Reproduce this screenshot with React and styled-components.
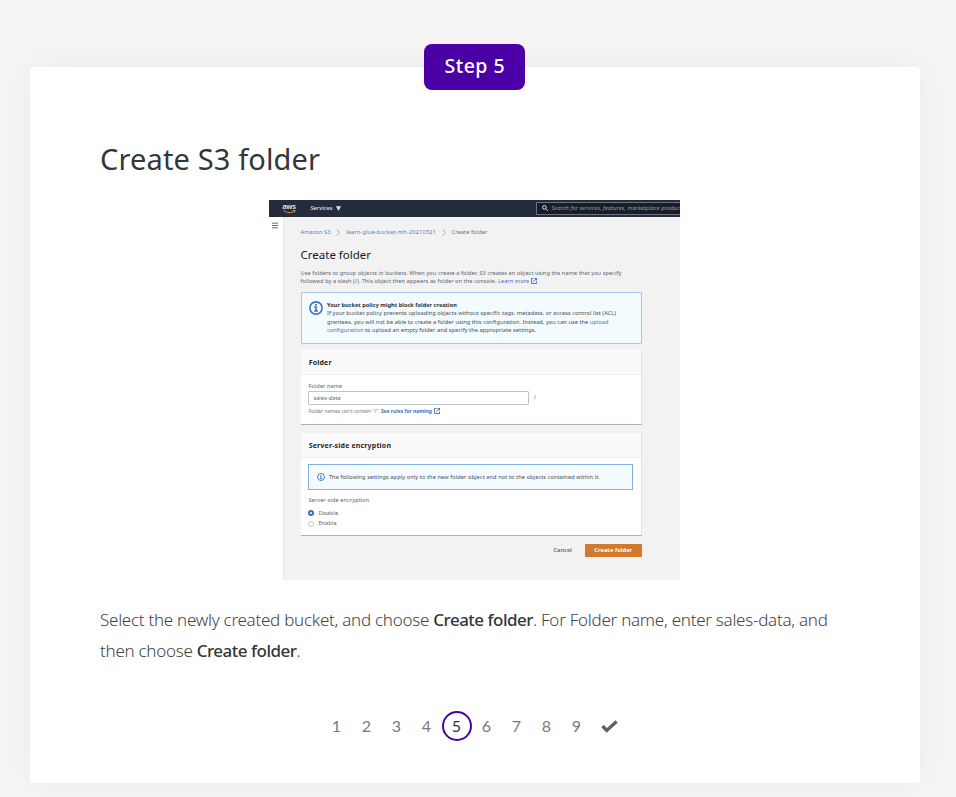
import React from 'react';
import styled, { createGlobalStyle } from 'styled-components';

const Global = createGlobalStyle`
  * { box-sizing: border-box; }
  body {
    margin: 0;
    background: #f5f5f5;
    font-family: "Noto Sans", "Open Sans", sans-serif;
    color: #333739;
    overflow: hidden;
  }
`;

const Page = styled.main`
  height: 797px;
  padding: 67px 36px 14px 30px;
`;
const Card = styled.section`
  position: relative;
  height: 716px;
  padding: 71px 70px 0;
  background: #fff;
  border-radius: 4px;
  box-shadow: 0 0 40px rgba(0, 0, 0, 0.05);
`;
const StepBadge = styled.div`
  position: absolute;
  top: -23px;
  left: 394.3px;
  width: 101px;
  height: 46px;
  border-radius: 8px;
  background: #4b00a5;
  color: #fff;
  font-size: 19.5px;
  font-weight: 500;
  line-height: 44px;
  letter-spacing: 0.5px;
  text-align: center;
`;
const Title = styled.h1`
  margin: 0;
  height: 62px;
  font-size: 29px;
  font-weight: 400;
  line-height: 41px;
  letter-spacing: 0.14px;
`;
const Body = styled.p`
  margin: 24px 0 0;
  height: 63px;
  color: #3f4345;
  font-size: 17px;
  font-weight: 300;
  line-height: 31px;
  letter-spacing: -0.265px;
  white-space: nowrap;
`;
const Strong = styled.strong`
  color: #333739;
  font-weight: 500;
  letter-spacing: -0.51px;
`;
const Pager = styled.nav`
  display: flex;
  align-items: center;
  height: 30px;
  margin: 44px 0 0 221.5px;
  font-family: Lato, sans-serif;
`;
const PageNumber = styled.a`
  width: 30px;
  height: 30px;
  border: 2px solid ${(p) => (p.$active ? '#4b00a5' : 'transparent')};
  border-radius: 50%;
  color: ${(p) => (p.$active ? '#333739' : '#77787b')};
  font-size: 16px;
  line-height: 26px;
  text-align: center;
`;
const CheckIcon = styled.svg`
  margin-left: 9px;
`;

/* Console screenshot */
const Shot = styled.figure`
  display: flex;
  flex-direction: column;
  width: 411px;
  height: 380px;
  margin: 0 0 0 169px;
  overflow: hidden;
  background: #f2f2f2;
`;
const TopBar = styled.header`
  display: flex;
  align-items: center;
  flex: none;
  height: 16.5px;
  background: #252d3d;
  color: #e4e7ea;
`;
const AwsLogo = styled.div`
  display: flex;
  flex-direction: column;
  align-items: center;
  flex: none;
  width: 15px;
  margin-left: 12.5px;
  font-size: 7.5px;
  font-weight: 600;
  line-height: 6px;
  letter-spacing: -0.2px;
`;
const Smile = styled.svg`
  margin-top: 0.5px;
`;
const Services = styled.div`
  display: flex;
  align-items: center;
  flex: none;
  gap: 3px;
  width: 225.5px;
  margin-left: 14px;
`;
const Search = styled.div`
  display: flex;
  align-items: center;
  gap: 4px;
  flex: 1;
  height: 13px;
  padding-left: 4.5px;
  border: 1px solid #6c7380;
  border-right: 0;
  background: #181d28;
  color: #9ea3aa;
`;
const Columns = styled.div`
  display: flex;
  flex: 1;
`;
const Rail = styled.aside`
  width: 14.5px;
  padding: 5px 0 0 2.5px;
  border-right: 1px solid #e5e7e7;
  background: #fff;
  line-height: 0;
`;
const Main = styled.div`
  width: 341px;
  margin-left: 17px;
  padding-top: 11px;
`;

const Text = styled.div`
  flex: none;
  color: ${(p) => p.$color || '#5c646e'};
  font-size: ${(p) => p.$size || 5.6}px;
  font-weight: ${(p) => p.$weight || 400};
  font-style: ${(p) => (p.$italic ? 'italic' : 'normal')};
  line-height: ${(p) => p.$line || 8.6}px;
  letter-spacing: ${(p) => p.$track || 0.08}px;
  white-space: nowrap;
`;
const Link = styled.span`
  color: #3b72c0;
  font-weight: ${(p) => p.$weight || 400};
`;
const Line = styled.div`
  display: flex;
  align-items: center;
  gap: ${(p) => p.$gap || 0}px;
`;
const Breadcrumbs = styled(Line)`
  height: 9px;
  gap: 5.5px;
`;
const Heading = styled.h2`
  margin: 8px 0 4px;
  height: 20px;
  color: #16191f;
  font-size: 11.5px;
  font-weight: 400;
  line-height: 20px;
`;
const Notice = styled.div`
  display: flex;
  gap: 4px;
  height: 52px;
  margin-top: 6px;
  padding: 8px 0 0 7.5px;
  border: 1.4px solid #a5c5ea;
  border-radius: 1px;
  background: #f3fbff;
`;
const InlineNotice = styled.div`
  display: flex;
  align-items: center;
  gap: 3.5px;
  width: 325px;
  height: 26px;
  padding-left: 8px;
  border: 1px solid #83aee0;
  background: #f3fbff;
`;
const Panel = styled.section`
  height: ${(p) => p.$height}px;
  margin-top: ${(p) => p.$gap}px;
  border-bottom: 1px solid #a9b0b2;
  border-right: 1px solid #dfe1e2;
  background: #fff;
`;
const PanelHeader = styled.h3`
  height: 25px;
  margin: 0;
  padding-left: 8.2px;
  border-bottom: 1px solid #eeefef;
  background: #fafafa;
  color: #23272e;
  font-size: 7px;
  font-weight: 700;
  line-height: 25px;
  letter-spacing: 0.17px;
`;
const PanelBody = styled.div`
  padding: ${(p) => p.$top}px 0 0 7.9px;
`;
const Input = styled.div`
  width: 220.5px;
  height: 13.5px;
  margin-top: 1px;
  padding-left: 4px;
  border: 1px solid #bfc4c6;
  border-radius: 1px;
`;
const Radio = styled.span`
  width: 6px;
  height: 6px;
  border: ${(p) => (p.$on ? '2px solid #3a6dc2' : '1px solid #c4cacc')};
  border-radius: 50%;
  background: #fff;
`;
const Actions = styled.div`
  display: flex;
  align-items: center;
  justify-content: flex-end;
  gap: 13px;
  margin-top: 7.5px;
`;
const Primary = styled.div`
  display: flex;
  align-items: center;
  justify-content: center;
  width: 56.5px;
  height: 13px;
  border-radius: 1px;
  background: #d17a2d;
`;

const External = () => (
  <svg width="6" height="6" viewBox="0 0 12 12" fill="none" stroke="#3268b5" strokeWidth="1.7">
    <path d="M5 1H1v10h10V7M7 1h4v4M11 1 4.5 7.5" />
  </svg>
);
const Info = ({ size }) => (
  <svg width={size} height={size} viewBox="0 0 16 16" fill="none" stroke="#3f72c6" strokeWidth="1.8">
    <circle cx="8" cy="8" r="7" />
    <path d="M6 7h2v4.5M5.8 11.5h4.4M7 4.4h2" />
  </svg>
);
const Chevron = () => (
  <svg width="4.5" height="7" viewBox="0 0 5 8" fill="none" stroke="#98a1a5">
    <path d="m.7.6 3.5 3.4L.7 7.4" />
  </svg>
);

const PAGES = [1, 2, 3, 4, 5, 6, 7, 8, 9];

const Console = () => (
  <Shot>
    <TopBar>
      <AwsLogo>
        aws
        <Smile width="13" height="4" viewBox="0 0 13 4" fill="none" stroke="#d9943b">
          <path d="M.5.5c3.5 2.7 8 2.7 11 .5M9.8.4l2.4-.1-.7 2" />
        </Smile>
      </AwsLogo>
      <Services>
        <Text $color="#e4e7ea" $weight={500} $track={0.03}>Services</Text>
        <svg width="5" height="5" viewBox="0 0 5 5" fill="#e4e7ea"><path d="M0 .3h5L2.5 5Z" /></svg>
      </Services>
      <Search>
        <svg width="6" height="6" viewBox="0 0 12 12" fill="none" stroke="#e4e7ea" strokeWidth="2">
          <circle cx="4.8" cy="4.8" r="3.6" /><path d="m7.6 7.6 4 4" />
        </svg>
        <Text $color="#9ea3aa" $italic $track={0.13}>Search for services, features, marketplace produc</Text>
      </Search>
    </TopBar>
    <Columns>
      <Rail>
        <svg width="6.5" height="7" viewBox="0 0 7 7" stroke="#5c646c"><path d="M0 1h7M0 3.5h7M0 6h7" /></svg>
      </Rail>
      <Main>
        <Breadcrumbs>
          <Text $color="#4c7fc4" $track={0.1}>Amazon S3</Text>
          <Chevron />
          <Text $color="#4c7fc4" $track={0.2}>learn-glue-bucket-mh-20210521</Text>
          <Chevron />
          <Text $color="#66707a" $track={0.12}>Create folder</Text>
        </Breadcrumbs>
        <Heading>Create folder</Heading>
        <Text $track={0.083}>Use folders to group objects in buckets. When you create a folder, S3 creates an object using the name that you specify</Text>
        <Line $gap={2}>
          <Text>followed by a slash (/). This object then appears as folder on the console. <Link>Learn more</Link></Text>
          <External />
        </Line>
        <Notice>
          <Info size={14} />
          <div>
            <Text $weight={700} $color="#2d3139" $track={0.02}>Your bucket policy might block folder creation</Text>
            <Text $color="#464b58">If your bucket policy prevents uploading objects without specific tags, metadata, or access control list (ACL)</Text>
            <Text $color="#464b58" $track={0.07}>grantees, you will not be able to create a folder using this configuration. Instead, you can use the <Link>upload</Link></Text>
            <Text $color="#464b58"><Link>configuration</Link> to upload an empty folder and specify the appropriate settings.</Text>
          </div>
        </Notice>
        <Panel $height={75} $gap={6.5}>
          <PanelHeader>Folder</PanelHeader>
          <PanelBody $top={6.7}>
            <Text>Folder name</Text>
            <Line $gap={5}>
              <Input><Text $line={12}>sales-data</Text></Input>
              <Text>/</Text>
            </Line>
            <Line $gap={2}>
              <Text $size={5} $line={12} $color="#747c84" $track={-0.02}>
                Folder names can't contain "/". <Link $weight={700}>See rules for naming</Link>
              </Text>
              <External />
            </Line>
          </PanelBody>
        </Panel>
        <Panel $height={103} $gap={8}>
          <PanelHeader>Server-side encryption</PanelHeader>
          <PanelBody $top={6}>
            <InlineNotice>
              <Info size={8} />
              <Text $color="#464b58" $track={0.1}>The following settings apply only to the new folder object and not to the objects contained within it.</Text>
            </InlineNotice>
            <Text $line={20} $track={0.09}>Server-side encryption</Text>
            <Line $gap={4}><Radio $on /><Text $line={1}>Disable</Text></Line>
            <Line $gap={4}><Radio /><Text $line={15}>Enable</Text></Line>
          </PanelBody>
        </Panel>
        <Actions>
          <Text $weight={600}>Cancel</Text>
          <Primary><Text $weight={700} $color="#fff" $track={0.1}>Create folder</Text></Primary>
        </Actions>
      </Main>
    </Columns>
  </Shot>
);

export default function App() {
  return (
    <Page>
      <Global />
      <Card>
        <StepBadge>Step 5</StepBadge>
        <Title>Create S3 folder</Title>
        <Console />
        <Body>
          Select the newly created bucket, and choose <Strong>Create folder</Strong>. For Folder name, enter sales-data, and
          <br />
          then choose <Strong>Create folder</Strong>.
        </Body>
        <Pager>
          {PAGES.map((n) => (
            <PageNumber key={n} $active={n === 5}>{n}</PageNumber>
          ))}
          <CheckIcon width="17" height="13" viewBox="0 0 17 13" fill="none" stroke="#5f6163" strokeWidth="3.4">
            <path d="m1.5 6 4.2 4.4L15.6 1.5" />
          </CheckIcon>
        </Pager>
      </Card>
    </Page>
  );
}
